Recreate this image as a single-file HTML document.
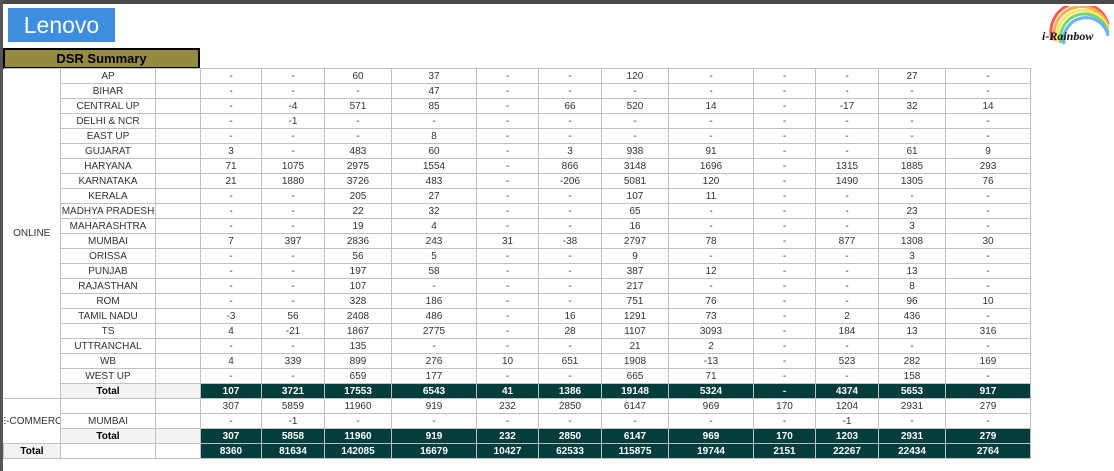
<!DOCTYPE html>
<html><head><meta charset="utf-8"><style>
html,body{margin:0;padding:0;background:#fff;width:1114px;height:471px;overflow:hidden;position:relative;font-family:"Liberation Sans",Arial,sans-serif}
.top{position:absolute;left:0;top:0;width:1114px;height:4px;background:#4a4a4a}
.left{position:absolute;left:0;top:0;width:3px;height:471px;background:#555}
.logo{position:absolute;left:8px;top:8px;width:107px;height:34px;background:#3d8ee0;color:#fff;font-size:23px;line-height:34px;text-align:center}
.dsr{position:absolute;left:3px;top:48px;width:193px;height:17px;background:#948a40;border:2px solid #000;font-weight:bold;font-size:13px;line-height:18px;text-align:center;color:#000}
table{position:absolute;left:3px;top:68px;width:1027px;border-collapse:collapse;table-layout:fixed}
td{border:1px solid #c0c0c0;height:14px;padding:0;font-size:10px;color:#333;text-align:center;line-height:13px;white-space:nowrap;overflow:hidden}
td.a{border-left:none}
tr.t td{background:#003d3c;color:#fff;font-weight:bold}
tr.t td.g{background:#f3f3f3;color:#000}
tr.t td.gl{background:#f3f3f3;color:#000;font-weight:bold}
tr.t td.w{background:#fff}
</style></head><body>
<div class="top"></div><div class="left"></div>
<div class="logo">Lenovo</div>
<div class="dsr">DSR Summary</div>
<svg style="position:absolute;left:1038px;top:6px" width="72" height="40" viewBox="0 0 72 40">
<g fill="none" stroke-width="3" opacity="0.8">
<path d="M14 34 A28 28 0 0 1 70 18" stroke="#ff3030"/>
<path d="M17 35 A25 25 0 0 1 70 21" stroke="#ff9a20"/>
<path d="M20 36 A22 22 0 0 1 70 24" stroke="#ffe040"/>
<path d="M23 37 A19 19 0 0 1 70 27" stroke="#50d050"/>
<path d="M26 38 A16 16 0 0 1 70 30" stroke="#40a0ff"/>
</g>
<text x="4" y="34" font-family="Liberation Serif,serif" font-style="italic" font-weight="bold" font-size="12" fill="#111">i-Rainbow</text>
</svg>
<table>
<colgroup><col style="width:57px"><col style="width:95px"><col style="width:45px"><col style="width:61px"><col style="width:63px"><col style="width:67px"><col style="width:85px"><col style="width:62px"><col style="width:63px"><col style="width:67px"><col style="width:85px"><col style="width:62px"><col style="width:63px"><col style="width:67px"><col style="width:85px"></colgroup>
<tr><td rowspan="22" class="a">ONLINE</td><td>AP</td><td></td><td>-</td><td>-</td><td>60</td><td>37</td><td>-</td><td>-</td><td>120</td><td>-</td><td>-</td><td>-</td><td>27</td><td>-</td></tr>
<tr><td>BIHAR</td><td></td><td>-</td><td>-</td><td>-</td><td>47</td><td>-</td><td>-</td><td>-</td><td>-</td><td>-</td><td>-</td><td>-</td><td>-</td></tr>
<tr><td>CENTRAL UP</td><td></td><td>-</td><td>-4</td><td>571</td><td>85</td><td>-</td><td>66</td><td>520</td><td>14</td><td>-</td><td>-17</td><td>32</td><td>14</td></tr>
<tr><td>DELHI &amp; NCR</td><td></td><td>-</td><td>-1</td><td>-</td><td>-</td><td>-</td><td>-</td><td>-</td><td>-</td><td>-</td><td>-</td><td>-</td><td>-</td></tr>
<tr><td>EAST UP</td><td></td><td>-</td><td>-</td><td>-</td><td>8</td><td>-</td><td>-</td><td>-</td><td>-</td><td>-</td><td>-</td><td>-</td><td>-</td></tr>
<tr><td>GUJARAT</td><td></td><td>3</td><td>-</td><td>483</td><td>60</td><td>-</td><td>3</td><td>938</td><td>91</td><td>-</td><td>-</td><td>61</td><td>9</td></tr>
<tr><td>HARYANA</td><td></td><td>71</td><td>1075</td><td>2975</td><td>1554</td><td>-</td><td>866</td><td>3148</td><td>1696</td><td>-</td><td>1315</td><td>1885</td><td>293</td></tr>
<tr><td>KARNATAKA</td><td></td><td>21</td><td>1880</td><td>3726</td><td>483</td><td>-</td><td>-206</td><td>5081</td><td>120</td><td>-</td><td>1490</td><td>1305</td><td>76</td></tr>
<tr><td>KERALA</td><td></td><td>-</td><td>-</td><td>205</td><td>27</td><td>-</td><td>-</td><td>107</td><td>11</td><td>-</td><td>-</td><td>-</td><td>-</td></tr>
<tr><td>MADHYA PRADESH</td><td></td><td>-</td><td>-</td><td>22</td><td>32</td><td>-</td><td>-</td><td>65</td><td>-</td><td>-</td><td>-</td><td>23</td><td>-</td></tr>
<tr><td>MAHARASHTRA</td><td></td><td>-</td><td>-</td><td>19</td><td>4</td><td>-</td><td>-</td><td>16</td><td>-</td><td>-</td><td>-</td><td>3</td><td>-</td></tr>
<tr><td>MUMBAI</td><td></td><td>7</td><td>397</td><td>2836</td><td>243</td><td>31</td><td>-38</td><td>2797</td><td>78</td><td>-</td><td>877</td><td>1308</td><td>30</td></tr>
<tr><td>ORISSA</td><td></td><td>-</td><td>-</td><td>56</td><td>5</td><td>-</td><td>-</td><td>9</td><td>-</td><td>-</td><td>-</td><td>3</td><td>-</td></tr>
<tr><td>PUNJAB</td><td></td><td>-</td><td>-</td><td>197</td><td>58</td><td>-</td><td>-</td><td>387</td><td>12</td><td>-</td><td>-</td><td>13</td><td>-</td></tr>
<tr><td>RAJASTHAN</td><td></td><td>-</td><td>-</td><td>107</td><td>-</td><td>-</td><td>-</td><td>217</td><td>-</td><td>-</td><td>-</td><td>8</td><td>-</td></tr>
<tr><td>ROM</td><td></td><td>-</td><td>-</td><td>328</td><td>186</td><td>-</td><td>-</td><td>751</td><td>76</td><td>-</td><td>-</td><td>96</td><td>10</td></tr>
<tr><td>TAMIL NADU</td><td></td><td>-3</td><td>56</td><td>2408</td><td>486</td><td>-</td><td>16</td><td>1291</td><td>73</td><td>-</td><td>2</td><td>436</td><td>-</td></tr>
<tr><td>TS</td><td></td><td>4</td><td>-21</td><td>1867</td><td>2775</td><td>-</td><td>28</td><td>1107</td><td>3093</td><td>-</td><td>184</td><td>13</td><td>316</td></tr>
<tr><td>UTTRANCHAL</td><td></td><td>-</td><td>-</td><td>135</td><td>-</td><td>-</td><td>-</td><td>21</td><td>2</td><td>-</td><td>-</td><td>-</td><td>-</td></tr>
<tr><td>WB</td><td></td><td>4</td><td>339</td><td>899</td><td>276</td><td>10</td><td>651</td><td>1908</td><td>-13</td><td>-</td><td>523</td><td>282</td><td>169</td></tr>
<tr><td>WEST UP</td><td></td><td>-</td><td>-</td><td>659</td><td>177</td><td>-</td><td>-</td><td>665</td><td>71</td><td>-</td><td>-</td><td>158</td><td>-</td></tr>
<tr class="t"><td class="g">Total</td><td class="g"></td><td>107</td><td>3721</td><td>17553</td><td>6543</td><td>41</td><td>1386</td><td>19148</td><td>5324</td><td>-</td><td>4374</td><td>5653</td><td>917</td></tr>
<tr><td rowspan="3" class="a" style="text-align:left;text-indent:-4px">E-COMMERCE</td><td></td><td></td><td>307</td><td>5859</td><td>11960</td><td>919</td><td>232</td><td>2850</td><td>6147</td><td>969</td><td>170</td><td>1204</td><td>2931</td><td>279</td></tr>
<tr><td>MUMBAI</td><td></td><td>-</td><td>-1</td><td>-</td><td>-</td><td>-</td><td>-</td><td>-</td><td>-</td><td>-</td><td>-1</td><td>-</td><td>-</td></tr>
<tr class="t"><td class="g">Total</td><td class="g"></td><td>307</td><td>5858</td><td>11960</td><td>919</td><td>232</td><td>2850</td><td>6147</td><td>969</td><td>170</td><td>1203</td><td>2931</td><td>279</td></tr>
<tr class="t"><td class="gl">Total</td><td class="w"></td><td class="w"></td><td>8360</td><td>81634</td><td>142085</td><td>16679</td><td>10427</td><td>62533</td><td>115875</td><td>19744</td><td>2151</td><td>22267</td><td>22434</td><td>2764</td></tr>
</table>
</body></html>
